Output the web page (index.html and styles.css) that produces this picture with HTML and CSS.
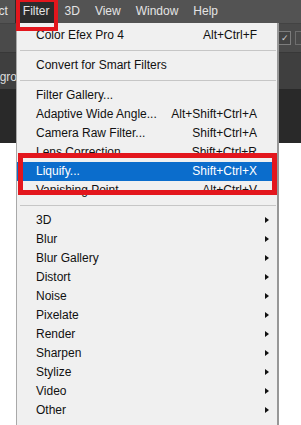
FILE: index.html
```html
<!DOCTYPE html>
<html lang="en">
<head>
	<meta charset="UTF-8">
	<meta name="viewport" content="width=device-width, initial-scale=1.0">
	<title>Filter menu</title>
	<link rel="stylesheet" href="styles.css">
</head>
<body>

	<div class="app">
		<nav class="menubar">
			<span class="menubar-item cut">Select</span>
			<span class="menubar-item active">Filter</span>
			<span class="menubar-item">3D</span>
			<span class="menubar-item">View</span>
			<span class="menubar-item">Window</span>
			<span class="menubar-item">Help</span>
		</nav>
		<div class="options">
			<span class="check">&#10003;</span>
			<span class="field"></span>
		</div>
		<div class="tabs">
			<span class="tab">Background</span>
		</div>
		<div class="canvas"></div>
		<div class="doc"></div>
	</div>

	<div class="menu">
		<div class="menu-item"><span>Color Efex Pro 4</span><span class="key">Alt+Ctrl+F</span></div>
		<div class="menu-sep"></div>
		<div class="menu-item"><span>Convert for Smart Filters</span></div>
		<div class="menu-sep"></div>
		<div class="menu-item"><span>Filter Gallery...</span></div>
		<div class="menu-item"><span>Adaptive Wide Angle...</span><span class="key">Alt+Shift+Ctrl+A</span></div>
		<div class="menu-item"><span>Camera Raw Filter...</span><span class="key">Shift+Ctrl+A</span></div>
		<div class="menu-item"><span>Lens Correction...</span><span class="key">Shift+Ctrl+R</span></div>
		<div class="menu-item hover"><span>Liquify...</span><span class="key">Shift+Ctrl+X</span></div>
		<div class="menu-item"><span>Vanishing Point...</span><span class="key">Alt+Ctrl+V</span></div>
		<div class="menu-sep"></div>
		<div class="menu-item"><span>3D</span><span></span><i class="sub"></i></div>
		<div class="menu-item"><span>Blur</span><span></span><i class="sub"></i></div>
		<div class="menu-item"><span>Blur Gallery</span><span></span><i class="sub"></i></div>
		<div class="menu-item"><span>Distort</span><span></span><i class="sub"></i></div>
		<div class="menu-item"><span>Noise</span><span></span><i class="sub"></i></div>
		<div class="menu-item"><span>Pixelate</span><span></span><i class="sub"></i></div>
		<div class="menu-item"><span>Render</span><span></span><i class="sub"></i></div>
		<div class="menu-item"><span>Sharpen</span><span></span><i class="sub"></i></div>
		<div class="menu-item"><span>Stylize</span><span></span><i class="sub"></i></div>
		<div class="menu-item"><span>Video</span><span></span><i class="sub"></i></div>
		<div class="menu-item"><span>Other</span><span></span><i class="sub"></i></div>
		<div class="menu-sep"></div>
	</div>

	<div class="mark mark-filter"></div>
	<div class="mark mark-liquify"></div>

</body>
</html>
```

FILE: styles.css
```css
:root{
	font-family: "Liberation Sans", Arial, sans-serif;
	font-size: 12px;
}

body{
	margin: 0;
	height: 425px;
	overflow: hidden;
	position: relative;
	background-color: #fff;
}

.app{
	display: flex;
	flex-direction: column;
}

.menubar{
	display: flex;
	height: 23px;
	line-height: 23px;
	background-color: #535353;
	color: #e4e4e4;
	white-space: nowrap;
}

.menubar-item{
	padding: 0 7.5px;
}

.cut{
	margin-left: -33px;
}

.active{
	background-color: #2c2c2c;
}

.options{
	display: flex;
	justify-content: flex-end;
	align-items: center;
	gap: 4px;
	height: 28px;
	background-color: #4a4a4a;
	border-top: 1px solid #434343;
	border-bottom: 1px solid #383838;
	padding-right: 0;
	margin-right: -10px;
}

.check{
	width: 11px;
	height: 12px;
	line-height: 12px;
	text-align: center;
	font-size: 9px;
	color: #cfcfcf;
	border: 1px solid #7d7d7d;
	background-color: #434343;
}

.field{
	width: 14px;
	height: 12px;
	border: 1px solid #6e6e6e;
}

.tabs{
	display: flex;
	align-items: flex-end;
	height: 36px;
	background-color: #3f3f3f;
}

.tab{
	margin-left: -27px;
	padding-bottom: 3px;
	line-height: 17px;
	color: #dcdcdc;
}

.canvas{
	height: 54px;
	background-color: #292929;
}

.doc{
	flex: 1;
	background-color: #fff;
}

.menu{
	position: absolute;
	left: 16px;
	top: 23px;
	width: 263px;
	bottom: -20px;
	box-sizing: border-box;
	padding-top: 3px;
	background-color: #f0f0f0;
	border-left: 1px solid #a9a9a9;
	border-right: 2px solid #979797;
	color: #111;
}

.menu-item{
	display: grid;
	grid-template-columns: 1fr auto 20px;
	height: 19px;
	line-height: 19px;
	padding-left: 19px;
	white-space: nowrap;
}

.menu-item.hover{
	background-color: #0b6dcc;
	color: #fff;
}

.sub{
	width: 0;
	height: 0;
	margin: 6px 0 0 8px;
	border-left: 4px solid #111;
	border-top: 3.5px solid transparent;
	border-bottom: 3.5px solid transparent;
}

.menu-sep{
	height: 1px;
	margin: 5px 1px 5px 3px;
	background-color: #c6c6c6;
}

.mark{
	position: absolute;
	box-sizing: border-box;
	border: 4px solid #e3161d;
}

.mark-filter{
	left: 16px;
	top: -2px;
	width: 42px;
	height: 33px;
}

.mark-liquify{
	left: 18px;
	top: 153px;
	width: 259px;
	height: 42px;
	border-width: 5px;
}
```
